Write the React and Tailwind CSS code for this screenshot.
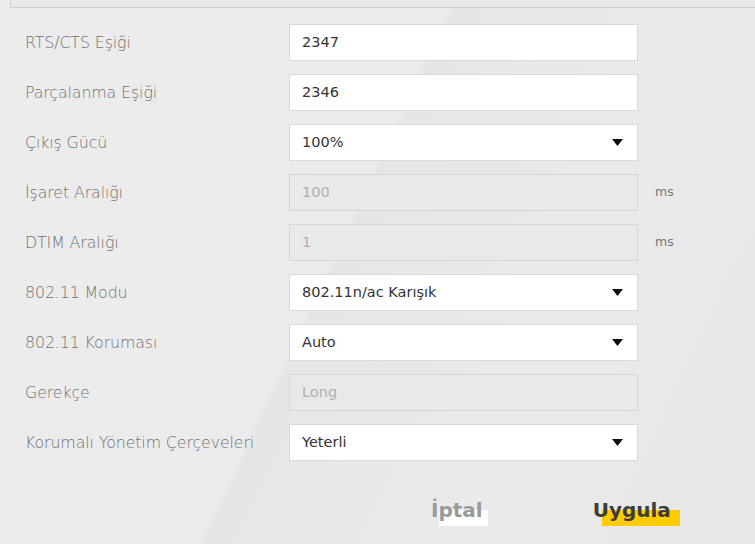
import React from "react";

const font = { fontFamily: '"DejaVu Sans", "Liberation Sans", sans-serif' };

function Arrow() {
  return (
    <svg width="11" height="7" viewBox="0 0 11 7" className="shrink-0">
      <polygon points="0,0 11,0 5.5,7" fill="#111" />
    </svg>
  );
}

function Row({ label, value, type = "text", unit }) {
  const disabled = type === "disabled";
  return (
    <div className="flex items-center h-[37px]">
      <div className="w-[289px] pl-[25px] text-[15.8px] text-[#717171] tracking-[-0.1px] font-[350]">{label}</div>
      <div
        className={
          "w-[349px] h-[37px] border flex items-center pl-[12px] pr-[14px] text-[14.5px] " +
          (disabled
            ? "bg-[#e9e9e9] border-[#d6d6d6] text-[#b0b0b0]"
            : "bg-white border-[#dadada] text-[#333]")
        }
      >
        <span className="flex-1">{value}</span>
        {type === "select" && <Arrow />}
      </div>
      {unit && <div className="ml-[17px] text-[12.5px] text-[#777]">{unit}</div>}
    </div>
  );
}

export default function App() {
  const rows = [
    { label: "RTS/CTS Eşiği", value: "2347" },
    { label: "Parçalanma Eşiği", value: "2346" },
    { label: "Çıkış Gücü", value: "100%", type: "select" },
    { label: "İşaret Aralığı", value: "100", type: "disabled", unit: "ms" },
    { label: "DTIM Aralığı", value: "1", type: "disabled", unit: "ms" },
    { label: "802.11 Modu", value: "802.11n/ac Karışık", type: "select" },
    { label: "802.11 Koruması", value: "Auto", type: "select" },
    { label: "Gerekçe", value: "Long", type: "disabled" },
    { label: "Korumalı Yönetim Çerçeveleri", value: "Yeterli", type: "select" },
  ];
  return (
    <div
      style={font}
      className="w-[755px] h-[544px] overflow-hidden bg-[#ebebeb] bg-[linear-gradient(115deg,#ececec_0%,#ebebeb_45%,#e6e6e6_45.2%,#eaeaea_70%,#e7e7e7_100%)]"
    >
      <div className="ml-[10px] h-[8px] border-l border-b border-[#cfcfcf] bg-[#e8e8e8]" />
      <div className="mt-[16px] flex flex-col gap-[13px]">
        {rows.map((r) => (
          <Row key={r.label} {...r} />
        ))}
      </div>
      <div className="mt-[36px] flex items-start">
        <div className="ml-[431px] relative">
          <span className="absolute left-[8px] top-[13px] w-[49px] h-[16px] bg-white" />
          <span className="relative text-[20px] font-bold text-[#9a9a9a] leading-[26px]">İptal</span>
        </div>
        <div className="ml-[110px] relative">
          <span className="absolute left-[9px] top-[13px] w-[78px] h-[16px] bg-[#ffcc00]" />
          <span className="relative text-[20px] font-bold text-[#3c3c3c] leading-[26px]">Uygula</span>
        </div>
      </div>
    </div>
  );
}
